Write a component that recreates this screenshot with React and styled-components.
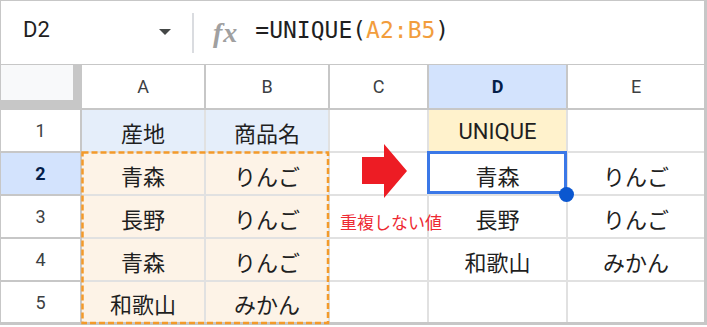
import styled, { createGlobalStyle } from 'styled-components';

const GlobalStyle = createGlobalStyle`
  body {
    margin: 0;
    background: #fff;
    font-family: Roboto, 'Noto Sans CJK JP', sans-serif;
  }
`;

const HEAD_LINE = '#c7c7c7';
const CELL_LINE = '#e1e1e1';

const Frame = styled.div`
  position: relative;
  width: 707px;
  height: 325px;
  box-sizing: border-box;
  border-style: solid;
  border-color: ${HEAD_LINE};
  border-width: 1px 3px 3px 1px;
`;

const FormulaBar = styled.div`
  display: flex;
  align-items: center;
  height: 63px;
  border-bottom: 1px solid ${HEAD_LINE};
`;

const NameBox = styled.div`
  display: flex;
  align-items: center;
  justify-content: space-between;
  box-sizing: border-box;
  width: 191px;
  padding: 0 21px 6px 22px;
  font-size: 22px;
  color: #1f1f1f;
`;

const Caret = styled.span`
  width: 0;
  height: 0;
  margin-top: 4px;
  border-left: 6.5px solid transparent;
  border-right: 6.5px solid transparent;
  border-top: 6px solid #444746;
`;

const Divider = styled.div`
  width: 2px;
  height: 40px;
  background: #dadce0;
`;

const FxIcon = styled.span`
  margin-left: 19px;
  font-family: 'Liberation Serif', serif;
  font-style: italic;
  font-weight: bold;
  font-size: 28px;
  letter-spacing: 1px;
  color: #a0a0a0;
`;

const Formula = styled.div`
  margin-left: 17px;
  padding-bottom: 6px;
  font-family: 'DejaVu Sans Mono', monospace;
  font-size: 23px;
  color: #1f1f1f;
`;

const Ref = styled.span`
  color: #f29d3d;
`;

const Sheet = styled.div`
  display: grid;
  grid-template-columns: 81px 124px 124px 99px 139px 136px;
  grid-template-rows: 45px 43px 43px 43px 43px 40px;
`;

const Corner = styled.div`
  box-sizing: border-box;
  background: #f8f9fa;
  border-right: 9px solid ${HEAD_LINE};
  border-bottom: 10px solid ${HEAD_LINE};
`;

const ColHeader = styled.div`
  display: flex;
  align-items: center;
  justify-content: center;
  box-sizing: border-box;
  background: ${(p) => (p.$active ? '#d3e3fd' : '#fff')};
  border-right: ${(p) => (p.$last ? 'none' : `2px solid ${HEAD_LINE}`)};
  border-bottom: 2px solid ${HEAD_LINE};
  font-size: 18px;
  font-weight: ${(p) => (p.$active ? 700 : 400)};
  color: ${(p) => (p.$active ? '#041e49' : '#3c4043')};
`;

const RowHeader = styled.div`
  display: flex;
  align-items: center;
  justify-content: center;
  box-sizing: border-box;
  background: ${(p) => (p.$active ? '#d3e3fd' : '#fff')};
  border-right: 2px solid ${HEAD_LINE};
  border-bottom: ${(p) => (p.$last ? 'none' : `2px solid ${HEAD_LINE}`)};
  font-size: 18px;
  font-weight: ${(p) => (p.$active ? 700 : 400)};
  color: ${(p) => (p.$active ? '#041e49' : '#3c4043')};
`;

const Cell = styled.div`
  display: flex;
  align-items: center;
  justify-content: center;
  box-sizing: border-box;
  padding-top: 2px;
  background: ${(p) => p.$bg || '#fff'};
  border-right: ${(p) => (p.$lastCol ? 'none' : `2px solid ${CELL_LINE}`)};
  border-bottom: ${(p) => (p.$lastRow ? 'none' : `2px solid ${CELL_LINE}`)};
  font-size: 22px;
  color: #1f1f1f;
`;

const Marquee = styled.svg`
  position: absolute;
  left: 80px;
  top: 150px;
  overflow: visible;
`;

const Selection = styled.div`
  position: absolute;
  left: 426px;
  top: 150px;
  width: 140px;
  height: 43px;
  box-sizing: border-box;
  border: 3px solid #3b78e7;
`;

const Handle = styled.div`
  position: absolute;
  left: 558px;
  top: 186px;
  width: 15px;
  height: 15px;
  border-radius: 50%;
  background: #0b57d0;
`;

const Arrow = styled.svg`
  position: absolute;
  left: 361px;
  top: 143px;
`;

const Note = styled.div`
  position: absolute;
  left: 339px;
  top: 212px;
  font-family: 'Noto Sans CJK JP', sans-serif;
  font-size: 17px;
  line-height: 17px;
  color: #ee2a33;
  white-space: nowrap;
`;

const BLUE = '#e5eefa';
const PEACH = '#fdf3e7';
const YELLOW = '#fff2cc';

const columns = ['A', 'B', 'C', 'D', 'E'];

const rows = [
  [
    { t: '産地', bg: BLUE },
    { t: '商品名', bg: BLUE },
    {},
    { t: 'UNIQUE', bg: YELLOW },
    {},
  ],
  [{ t: '青森', bg: PEACH }, { t: 'りんご', bg: PEACH }, {}, { t: '青森' }, { t: 'りんご' }],
  [{ t: '長野', bg: PEACH }, { t: 'りんご', bg: PEACH }, {}, { t: '長野' }, { t: 'りんご' }],
  [{ t: '青森', bg: PEACH }, { t: 'りんご', bg: PEACH }, {}, { t: '和歌山' }, { t: 'みかん' }],
  [{ t: '和歌山', bg: PEACH }, { t: 'みかん', bg: PEACH }, {}, {}, {}],
];

export default function App() {
  return (
    <>
      <GlobalStyle />
      <Frame>
        <FormulaBar>
          <NameBox>
            <span>D2</span>
            <Caret />
          </NameBox>
          <Divider />
          <FxIcon>fx</FxIcon>
          <Formula>
            =UNIQUE(<Ref>A2:B5</Ref>)
          </Formula>
        </FormulaBar>

        <Sheet>
          <Corner />
          {columns.map((c, i) => (
            <ColHeader key={c} $active={c === 'D'} $last={i === columns.length - 1}>
              {c}
            </ColHeader>
          ))}
          {rows.map((cells, r) => [
            <RowHeader key={`h${r}`} $active={r === 1} $last={r === rows.length - 1}>
              {r + 1}
            </RowHeader>,
            ...cells.map((cell, c) => (
              <Cell
                key={`${r}-${c}`}
                $bg={cell.bg}
                $lastCol={c === cells.length - 1}
                $lastRow={r === rows.length - 1}
              >
                {cell.t}
              </Cell>
            )),
          ])}
        </Sheet>

        <Marquee width="249" height="175">
          <rect
            x="1.5"
            y="1.5"
            width="245.5"
            height="170.5"
            fill="none"
            stroke="#f39a2b"
            strokeWidth="2.5"
            strokeDasharray="6 3"
          />
        </Marquee>
        <Arrow width="46" height="55" viewBox="0 0 46 55">
          <polygon points="0,13 22,13 22,0 45,27 22,54 22,40 0,40" fill="#ed1c24" />
        </Arrow>
        <Note>重複しない値</Note>
        <Selection />
        <Handle />
      </Frame>
    </>
  );
}
